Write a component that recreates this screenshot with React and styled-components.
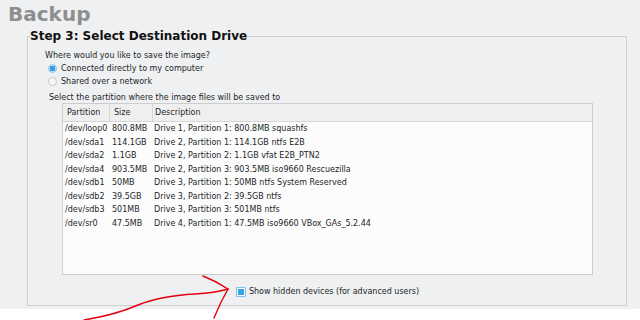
import React from "react";
import styled, { createGlobalStyle } from "styled-components";

const GlobalStyle = createGlobalStyle`
  html, body { margin: 0; padding: 0; background: #ffffff; }
  body { font-family: "DejaVu Sans", "Liberation Sans", sans-serif; color: #232627; }
  * { box-sizing: border-box; }
`;

const Root = styled.div`
  position: relative;
  width: 640px;
  height: 320px;
  overflow: hidden;
`;

const Page = styled.div`
  background: #eff0f1;
  padding: 4px 0 3px;
`;

const Title = styled.h1`
  margin: 0 0 5px 8px;
  font-size: 20px;
  line-height: 20px;
  font-weight: bold;
  color: #8e8e8e;
`;

const Frame = styled.fieldset`
  margin: 0 0 0 27px;
  width: 600px;
  padding: 0;
  border: 1px solid #cfd0d2;
  min-width: 0;
`;

const Legend = styled.legend`
  margin-left: 2px;
  padding: 0;
  font-size: 12px;
  line-height: 14px;
  font-weight: bold;
  color: #111;
`;

const Content = styled.div`
  padding: 7px 0 7px 17px;
  font-size: 8px;
`;

const Prompt = styled.div`
  line-height: 12px;
`;

const RadioRow = styled.label`
  display: flex;
  align-items: center;
  gap: 4px;
  height: 13px;
  margin-left: 3px;
  line-height: 13px;
`;

const Radio = styled.span`
  width: 9px;
  height: 9px;
  border-radius: 50%;
  border: 1px solid ${(p) => (p.$checked ? "#86c1e8" : "#c4c6c8")};
  background: ${(p) =>
    p.$checked
      ? "radial-gradient(circle, #3a9fe2 0 2.8px, #f4f9fd 3.2px)"
      : "#f7f7f8"};
`;

const SelectLabel = styled.div`
  margin: 4px 0 0 4px;
  line-height: 11px;
`;

const Table = styled.div`
  margin-left: 17px;
  width: 531px;
  height: 172px;
  border: 1px solid #cdcdcf;
  background: #fcfcfc;
`;

const Header = styled.div`
  display: grid;
  grid-template-columns: 47px 43px 1fr;
  height: 18px;
  background: #efeff0;
  border-bottom: 1px solid #d6d6d8;
`;

const HeaderCell = styled.div`
  padding-left: ${(p) => p.$pad}px;
  line-height: 17px;
  border-right: ${(p) => (p.$last ? "none" : "1px solid #d6d6d8")};
`;

const Row = styled.div`
  display: grid;
  grid-template-columns: 47px 43px 1fr;
  height: 13.5px;
  line-height: 13.5px;
`;

const Cell = styled.div`
  padding-left: ${(p) => p.$pad}px;
  white-space: nowrap;
`;

const CheckWrap = styled.div`
  margin: 10px 0 0 17px;
  width: 531px;
  display: flex;
  justify-content: center;
`;

const CheckRow = styled.label`
  display: flex;
  align-items: center;
  gap: 3px;
  height: 13px;
  line-height: 13px;
`;

const Checkbox = styled.span`
  width: 10px;
  height: 10px;
  border: 1px solid #86bfe6;
  border-radius: 1px;
  background: #f4f9fd;
  padding: 1px;
  display: flex;
`;

const CheckMark = styled.span`
  flex: 1;
  background: #3aa2e4;
`;

const Annotation = styled.svg`
  position: absolute;
  left: 0;
  top: 0;
  pointer-events: none;
`;

const rows = [
  ["/dev/loop0", "800.8MB", "Drive 1, Partition 1: 800.8MB squashfs"],
  ["/dev/sda1", "114.1GB", "Drive 2, Partition 1: 114.1GB ntfs E2B"],
  ["/dev/sda2", "1.1GB", "Drive 2, Partition 2: 1.1GB vfat E2B_PTN2"],
  ["/dev/sda4", "903.5MB", "Drive 2, Partition 3: 903.5MB iso9660 Rescuezilla"],
  ["/dev/sdb1", "50MB", "Drive 3, Partition 1: 50MB ntfs System Reserved"],
  ["/dev/sdb2", "39.5GB", "Drive 3, Partition 2: 39.5GB ntfs"],
  ["/dev/sdb3", "501MB", "Drive 3, Partition 3: 501MB ntfs"],
  ["/dev/sr0", "47.5MB", "Drive 4, Partition 1: 47.5MB iso9660 VBox_GAs_5.2.44"],
];

export default function App() {
  return (
    <Root>
      <GlobalStyle />
      <Page>
        <Title>Backup</Title>
        <Frame>
          <Legend>Step 3: Select Destination Drive</Legend>
          <Content>
            <Prompt>Where would you like to save the image?</Prompt>
            <RadioRow>
              <Radio $checked />
              Connected directly to my computer
            </RadioRow>
            <RadioRow>
              <Radio />
              Shared over a network
            </RadioRow>
            <SelectLabel>Select the partition where the image files will be saved to</SelectLabel>
            <Table>
              <Header>
                <HeaderCell $pad={4}>Partition</HeaderCell>
                <HeaderCell $pad={4}>Size</HeaderCell>
                <HeaderCell $pad={2} $last>Description</HeaderCell>
              </Header>
              {rows.map((r) => (
                <Row key={r[0]}>
                  <Cell $pad={2}>{r[0]}</Cell>
                  <Cell $pad={2}>{r[1]}</Cell>
                  <Cell $pad={1}>{r[2]}</Cell>
                </Row>
              ))}
            </Table>
            <CheckWrap>
              <CheckRow>
                <Checkbox>
                  <CheckMark />
                </Checkbox>
                Show hidden devices (for advanced users)
              </CheckRow>
            </CheckWrap>
          </Content>
        </Frame>
      </Page>
      <Annotation width="640" height="320" viewBox="0 0 640 320">
        <g fill="none" stroke="#e3000f" strokeWidth="1.4" strokeLinecap="round">
          <path d="M84 320 Q 115 315 138 305 Q 160 296 195 294 Q 215 293 228 289" />
          <path d="M203 276 Q 216 281 228 289" />
          <path d="M228 289 Q 220 303 214 318" />
        </g>
      </Annotation>
    </Root>
  );
}
